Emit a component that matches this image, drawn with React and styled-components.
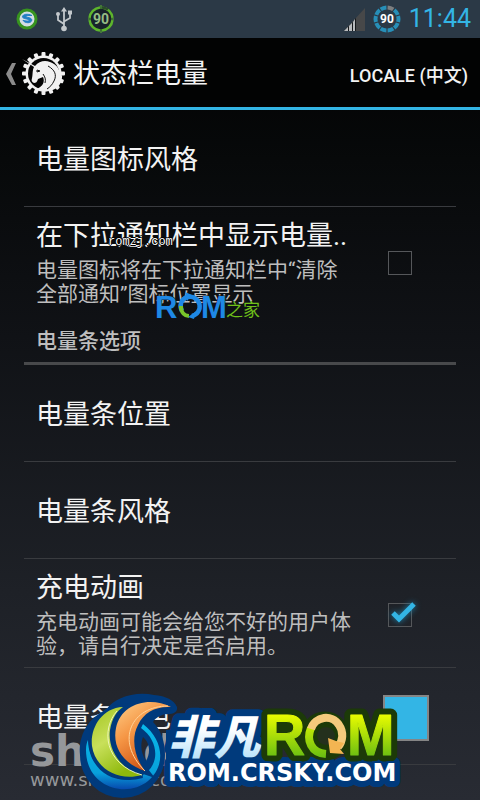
import React, { useState } from "react";
import styled, { createGlobalStyle, css } from "styled-components";

const GlobalStyle = createGlobalStyle`
  * { box-sizing: border-box; }
  body { margin: 0; background: #000; }
  button, input { font: inherit; margin: 0; }
`;

const Screen = styled.div`
  position: relative;
  display: flex;
  flex-direction: column;
  height: 100vh;
  overflow: hidden;
  color: #f3f3f3;
  font-family: Roboto, "Noto Sans CJK SC", sans-serif;
  background: linear-gradient(#000 0%, #07090a 20%, #101216 42%, #1e2127 74%, #282b33 100%);
`;

const StatusBar = styled.div`
  display: flex;
  flex: none;
  align-items: center;
  justify-content: space-between;
  height: 38px;
  padding: 0 9px 0 14px;
  background: #2b3946;
`;

const StatusGroup = styled.div`
  display: flex;
  align-items: center;
  gap: ${({ $gap }) => $gap}px;
`;

const Clock = styled.time`
  color: #33b5e5;
  font-size: 25px;
  line-height: 38px;
`;

const ActionBar = styled.header`
  display: flex;
  flex: none;
  align-items: center;
  height: 72px;
  padding: 2px 12px 0 6px;
  background: #020303;
  border-bottom: 3px solid #33b5e5;
`;

const BackButton = styled.button`
  display: flex;
  align-items: center;
  gap: 4px;
  padding: 0;
  border: 0;
  background: none;
`;

const PageTitle = styled.h1`
  flex: 1;
  margin: 0 0 0 8px;
  font-size: 27px;
  font-weight: 400;
  line-height: 32px;
`;

const LocaleButton = styled.button`
  padding: 0;
  border: 0;
  background: none;
  color: #f3f3f3;
  font-size: 18px;
  font-weight: 500;
`;

const List = styled.main`
  flex: 1;
  padding: 0 24px;
  overflow: hidden;
`;

const Row = styled.label`
  display: flex;
  align-items: center;
  gap: 32px;
  min-height: 97px;
  padding: 13px ${({ $end }) => $end || 12}px 9px 12px;
  border-bottom: ${({ $last }) => ($last ? "0" : "1px solid #393b3f")};
`;

const RowText = styled.div`
  flex: 1;
`;

const RowTitle = styled.div`
  font-size: 27px;
  line-height: 32px;
  white-space: nowrap;
`;

const Summary = styled.div`
  margin-top: 6px;
  color: #bebebe;
  font-size: 21px;
  line-height: 24px;
`;

const SectionTitle = styled.h2`
  margin: 0;
  padding: 10px 12px 5px;
  border-bottom: 3px solid #48494b;
  color: #bebebe;
  font-size: 21px;
  font-weight: 500;
  line-height: 32px;
`;

const CheckWrap = styled.span`
  position: relative;
  display: flex;
`;

const CheckBox = styled.input`
  appearance: none;
  width: 24px;
  height: 24px;
  border: 1px solid #55575a;
`;

const CheckMark = styled.svg`
  position: absolute;
  left: -4px;
  top: -8px;
  pointer-events: none;
  filter: drop-shadow(0 0 3px #1d84ad);
`;

const Swatch = styled.button`
  width: 46px;
  height: 46px;
  padding: 0;
  border: 2px solid #858585;
  background: #33b5e5;
`;

const overlay = css`
  position: absolute;
  pointer-events: none;
`;

const SiteStamp = styled.span`
  ${overlay}
  left: 108px;
  top: 234px;
  color: #fff;
  font: 12px/16px "Liberation Mono", monospace;
  text-shadow: 1px 0 #000, -1px 0 #000, 0 1px #000, 0 -1px #000;
`;

const RomMark = styled.svg`
  ${overlay}
  left: 156px;
  top: 290px;
`;

const GreyMark = styled.div`
  ${overlay}
  left: 30px;
  bottom: 9px;
  color: #95979a;
  font-family: "DejaVu Sans", sans-serif;
`;

const GreyName = styled.div`
  font-size: 42px;
  font-weight: 700;
  line-height: 34px;
`;

const GreyUrl = styled.div`
  font-size: 18px;
  line-height: 22px;
`;

const Badge = styled.svg`
  ${overlay}
  left: 75px;
  bottom: 0;
`;

function segments(cx, cy, r, count, gap) {
  const step = (Math.PI * 2) / count;
  return Array.from({ length: count }, (_, i) => {
    const a = i * step - Math.PI / 2 + gap;
    const b = (i + 1) * step - Math.PI / 2 - gap;
    const p = (t) => `${cx + r * Math.cos(t)} ${cy + r * Math.sin(t)}`;
    return `M${p(a)}A${r} ${r} 0 0 1 ${p(b)}`;
  });
}

function AppDot() {
  return (
    <svg width="26" height="26" viewBox="0 0 26 26" aria-hidden="true">
      <circle cx="13" cy="13" r="9" fill="#d3dce3" stroke="#37931f" strokeWidth="3" />
      <path d="M18 9.5C14 7.5 8.5 8 8.5 10.8c0 2.4 6.5 1.8 6.5 3.4 0 1.2-3.6 1-6 .1 1.5 3 8.5 3.500 8.800-.2.200-2.800-5.800-2.400-5.800-3.600 0-1.200 3.500-1 6-1z" fill="#237fc4" stroke="#237fc4" />
    </svg>
  );
}

function UsbIcon() {
  return (
    <svg width="18" height="26" viewBox="0 0 18 26" fill="none" stroke="#c3c8cc" strokeWidth="1.800" aria-hidden="true">
      <path d="M9 22V4M9 18l-6-4V9M9 15.500l6-3.500V7" />
      <path d="M9 1l3 4.500H6z" fill="#c3c8cc" stroke="none" />
      <circle cx="9" cy="22.500" r="2.800" fill="#c3c8cc" stroke="none" />
      <circle cx="3" cy="8" r="2" fill="#c3c8cc" stroke="none" />
      <path d="M13 4.500h4v4h-4z" fill="#c3c8cc" stroke="none" />
    </svg>
  );
}

function GreenBattery() {
  return (
    <svg width="26" height="28" viewBox="0 0 26 28" aria-label="90%">
      <circle cx="13" cy="14" r="11.500" fill="#18222a" />
      {segments(13, 14, 11.5, 4, 0.09).map((d) => (
        <path key={d} d={d} fill="none" stroke="#5db52c" strokeWidth="2.500" />
      ))}
      <path d="M14 2.500a11.500 11.500 0 0 1 6 2" fill="none" stroke="#2b4b2b" strokeWidth="2.500" />
      <path d="M13 0v4M13 24v4M0 14h3M23 14h3" stroke="#5db52c" strokeWidth="1" />
      <text x="13" y="19" textAnchor="middle" fontFamily="Roboto, sans-serif" fontWeight="700" fontSize="14" fill="#95bd84">90</text>
    </svg>
  );
}

function Signal() {
  return (
    <svg width="21" height="23" viewBox="0 0 21 23" aria-hidden="true">
      <path d="M0 23L21 0v23z" fill="#474849" />
      <path d="M0 23l4-4v4zM5 18l3-3v8H5zM9 14l2-3v12H9z" fill="#b9bbbd" />
      <path d="M4 19l1-1v5H4zM8 15l1-1v9H8zM11 11l1-1v13h-1z" fill="#16191b" />
    </svg>
  );
}

function BlueBattery() {
  return (
    <svg width="28" height="28" viewBox="0 0 28 28" aria-label="90%">
      {segments(14, 14, 11.5, 10, 0.05).map((d, i) => (
        <path key={d} d={d} fill="none" stroke={i === 0 ? "#7d7f80" : "#278fb8"} strokeWidth="4" />
      ))}
      <text x="14" y="18" textAnchor="middle" fontFamily="Roboto, sans-serif" fontWeight="700" fontSize="12" fill="#fff">90</text>
    </svg>
  );
}

function BackArrow() {
  return (
    <svg width="12" height="22" viewBox="0 0 12 22" aria-hidden="true">
      <path d="M10 0L6 0 0 11l6 11h4L5 11z" fill="#8b8b8b" />
    </svg>
  );
}

function UnicornGear() {
  const teeth = Array.from({ length: 16 }, (_, i) => i * 22.5);
  return (
    <svg width="43" height="43" viewBox="0 0 43 43" aria-hidden="true">
      <g fill="#f2f2f2">
        {teeth.map((t) => (
          <rect key={t} x="19.500" y="0" width="4" height="6" rx="1" transform={`rotate(${t} 21.5 21.5)`} />
        ))}
        <circle cx="21.500" cy="21.500" r="18" />
      </g>
      <circle cx="21.500" cy="21.500" r="15.500" fill="#050505" />
      <path d="M0 7l13 7c4-5 10-6 15-4 8 3 11 9 9 16 2-1 2-2 3-4 1 8-4 16-13 17-5 1-9 0-12-2 6-3 8-7 6-12l-5 2c-1 3-2 4-4 4-2-1-3-2-2-5 1-3 0-7 2-11z" fill="#f2f2f2" />
      <path d="M15 18l3 1-3 1zM26 14c7 4 9 9 6 15-2 4-4 6-7 8M21 22c2 3 3 5 2 9" fill="none" stroke="#111" strokeWidth="1" />
    </svg>
  );
}

function RomHomeMark() {
  return (
    <RomMark width="108" height="34" viewBox="0 0 108 34" aria-label="ROM之家">
      <g fontFamily="Liberation Sans, sans-serif" fontWeight="700" fontSize="31" fill="#1e88e5" stroke="#10151b" strokeWidth="1" paintOrder="stroke">
        <text x="-1" y="28">R</text>
        <text x="45" y="28">M</text>
      </g>
      <path d="M32 7A9.500 9.500 0 0 1 36 26" fill="none" stroke="#1e88e5" strokeWidth="4.500" />
      <path d="M31 7a9.500 9.500 0 0 0-5 14" fill="none" stroke="#1e88e5" strokeWidth="4.500" />
      <path d="M25 16c0 7 4 10 8 10" fill="none" stroke="#79c52a" strokeWidth="4" />
      <path d="M29 2l7 3-5 6zM39 22l-1 7-6-2z" fill="#1e88e5" />
      <text x="70" y="26" fontFamily="Noto Sans CJK SC, sans-serif" fontSize="17" fontWeight="400" fill="#6fc01a">之家</text>
    </RomMark>
  );
}

function CrskyBadge() {
  const orange = "M171 707C150 696 121 703 116 728C112 748 124 764 145 771C134 757 131 738 138 725C144 712 156 706 171 707Z";
  const green = "M123 707C101 708 90 729 92 746C95 768 118 782 142 775C123 771 107 751 110 730C112 718 117 711 123 707Z";
  const latin = "Liberation Sans, sans-serif";
  return (
    <Badge width="335" height="110" viewBox="75 690 335 110" aria-label="非凡ROM ROM.CRSKY.COM">
      <defs>
        <linearGradient id="or" x1="0" y1="0" x2="0.6" y2="1">
          <stop offset="0" stopColor="#ffd08a" />
          <stop offset="0.45" stopColor="#f59645" />
          <stop offset="1" stopColor="#c94a0c" />
        </linearGradient>
        <linearGradient id="gr" x1="0" y1="0" x2="0.5" y2="1">
          <stop offset="0" stopColor="#a3c520" />
          <stop offset="0.5" stopColor="#c8e05a" />
          <stop offset="1" stopColor="#8fb90c" />
        </linearGradient>
        <linearGradient id="cy" x1="0" y1="0" x2="0" y2="1">
          <stop offset="0" stopColor="#08b9ea" />
          <stop offset="0.75" stopColor="#08a1dc" />
          <stop offset="1" stopColor="#0749ad" />
        </linearGradient>
        <linearGradient id="ice" x1="0" y1="715" x2="0" y2="760" gradientUnits="userSpaceOnUse">
          <stop offset="0.3" stopColor="#fff" />
          <stop offset="1" stopColor="#b4e1fa" />
        </linearGradient>
        <linearGradient id="lime" x1="0" y1="715" x2="0" y2="758" gradientUnits="userSpaceOnUse">
          <stop offset="0" stopColor="#e8fb00" />
          <stop offset="1" stopColor="#67bd12" />
        </linearGradient>
      </defs>
      <path fillRule="evenodd" fill="#003a7c" d="M80 755a42.500 43 0 0 1 26-45c8-12 28-19 48-15 12 1 20 5 23 12 1 5-4 8-12 7 0 0-10 3-12 8 8 8 12 20 12 33a42.500 43 0 0 1-85 0zM143 737c-3 8-2 16 3 24 4-7 5-17-3-24z" />
      <g fill="none" stroke="#003a7c" strokeLinejoin="round">
        <text x="168" y="754" fontFamily="Noto Sans CJK SC, sans-serif" fontSize="46" fontWeight="900" fontStyle="italic" strokeWidth="14">非凡</text>
        <text x="168" y="781" fontFamily="DejaVu Sans, sans-serif" fontSize="24" fontWeight="700" strokeWidth="12">ROM.CRSKY.COM</text>
      </g>
      <path d="M166 730h90v48h-90z" fill="#003a7c" />
      <path d="M143 724C164 740 166 766 148 781C126 799 86 787 86 750C86 745 87 742 88 740C89 776 124 789 146 773C160 762 158 740 141 728Z" fill="url(#cy)" />
      <path d={green} fill="url(#gr)" stroke="#003a7c" strokeWidth="6" paintOrder="stroke" />
      <path d="M117 711c-16 18-13 53 25 64" fill="none" stroke="#edf6b9" strokeWidth="1" />
      <path d={orange} fill="url(#or)" stroke="#003a7c" strokeWidth="7" paintOrder="stroke" />
      <path d="M168 706c-36 0-54 34-23 65" fill="none" stroke="#ffd49b" strokeWidth="1" />
      <text x="168" y="754" fontFamily="Noto Sans CJK SC, sans-serif" fontSize="46" fontWeight="900" fontStyle="italic" fill="url(#ice)">非凡</text>
      <g fontFamily={latin} fontSize="57" fontWeight="700" strokeLinejoin="round">
        <g fill="#1c3a08" stroke="#1c3a08" strokeWidth="13">
          <text x="264" y="755">R</text>
          <circle cx="325" cy="736" r="18" />
          <text x="347" y="755">M</text>
        </g>
        <circle cx="326" cy="736" r="9" fill="#24301d" />
        <g fill="url(#lime)" stroke="url(#lime)" strokeWidth="1">
          <text x="264" y="755">R</text>
          <text x="347" y="755">M</text>
        </g>
      </g>
      <path d="M311 728c-5 12 0 25 15 26" fill="none" stroke="url(#lime)" strokeWidth="8" />
      <path d="M311 729c4-13 21-15 28-4 5 7 4 16-1 22" fill="none" stroke="#f5ca7c" strokeWidth="8" />
      <path d="M328 738l2 15 14 1-4-5 4-6-8-2z" fill="#f3b552" />
      <text x="168" y="781" fontFamily="DejaVu Sans, sans-serif" fontSize="24" fontWeight="700" fill="#fff" stroke="#003a7c" strokeWidth="4" paintOrder="stroke">ROM.CRSKY.COM</text>
    </Badge>
  );
}

function Check({ initial }) {
  const [on, setOn] = useState(initial);
  return (
    <CheckWrap>
      <CheckBox type="checkbox" checked={on} onChange={(e) => setOn(e.target.checked)} />
      {on && (
        <CheckMark width="36" height="36" viewBox="0 0 36 36" aria-hidden="true">
          <path d="M9 18l6 6L30 9" fill="none" stroke="#33b5e5" strokeWidth="5" />
        </CheckMark>
      )}
    </CheckWrap>
  );
}

function Setting({ title, summary, end, last, children }) {
  return (
    <Row as={children ? "label" : "div"} $end={end} $last={last}>
      <RowText>
        <RowTitle>{title}</RowTitle>
        {summary && <Summary>{summary}</Summary>}
      </RowText>
      {children}
    </Row>
  );
}

export default function App() {
  return (
    <Screen lang="zh-CN">
      <GlobalStyle />
      <StatusBar>
        <StatusGroup $gap={15}>
          <AppDot />
          <UsbIcon />
          <GreenBattery />
        </StatusGroup>
        <StatusGroup $gap={8}>
          <Signal />
          <BlueBattery />
          <Clock>11:44</Clock>
        </StatusGroup>
      </StatusBar>
      <ActionBar>
        <BackButton aria-label="返回">
          <BackArrow />
          <UnicornGear />
        </BackButton>
        <PageTitle>状态栏电量</PageTitle>
        <LocaleButton>LOCALE (中文)</LocaleButton>
      </ActionBar>
      <List>
        <Setting title="电量图标风格" />
        <Setting title="在下拉通知栏中显示电量.." summary="电量图标将在下拉通知栏中“清除全部通知”图标位置显示" end={44} last>
          <Check initial={false} />
        </Setting>
        <SectionTitle>电量条选项</SectionTitle>
        <Setting title="电量条位置" />
        <Setting title="电量条风格" />
        <Setting title="充电动画" summary="充电动画可能会给您不好的用户体验，请自行决定是否启用。" end={44}>
          <Check initial />
        </Setting>
        <Setting title="电量条颜色" end={27}>
          <Swatch aria-label="电量条颜色" />
        </Setting>
      </List>
      <SiteStamp>romzj.com</SiteStamp>
      <RomHomeMark />
      <GreyMark>
        <GreyName>shendu</GreyName>
        <GreyUrl>www.shendu.com</GreyUrl>
      </GreyMark>
      <CrskyBadge />
    </Screen>
  );
}
